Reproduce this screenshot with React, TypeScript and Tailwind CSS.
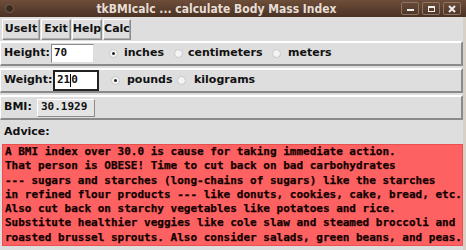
import React from "react";

const ui = { fontFamily: '"DejaVu Sans", sans-serif' };
const mono = { fontFamily: '"DejaVu Sans Mono", monospace' };

function Radio({ on }: { on?: boolean }) {
  return (
    <span className="inline-flex shrink-0 w-[9px] h-[9px] rounded-full bg-[#f4f4f4] border border-[#c8c8c8] items-center justify-center">
      {on && <span className="w-[3px] h-[3px] rounded-full bg-[#222]" />}
    </span>
  );
}

function TkButton({ label, w }: { label: string; w: string }) {
  return (
    <div
      className={`${w} h-[21px] flex items-center justify-center bg-[#dedede] border border-t-white border-l-white border-r-[#8a8a8a] border-b-[#8a8a8a] shadow-[inset_-1px_-1px_0_#b0b0b0] text-[11px] font-bold text-[#111]`}
    >
      {label}
    </div>
  );
}

function Frame({ children }: { children: React.ReactNode }) {
  return (
    <div className="h-[25px] flex items-center border-t-2 border-l border-t-white border-l-white border-r-2 border-b-2 border-r-[#8a8a8a] border-b-[#8a8a8a] pl-[3px] whitespace-nowrap">
      {children}
    </div>
  );
}

export default function App() {
  const lines = [
    "A BMI index over 30.0 is cause for taking immediate action.",
    "That person is OBESE! Time to cut back on bad carbohydrates",
    "--- sugars and starches (long-chains of sugars) like the starches",
    "in refined flour products --- like donuts, cookies, cake, bread, etc.",
    "Also cut back on starchy vegetables like potatoes and rice.",
    "Substitute healthier veggies like cole slaw and steamed broccoli and",
    "roasted brussel sprouts. Also consider salads, green beans, and peas.",
  ];
  return (
    <div className="w-[466px] h-[250px] overflow-hidden bg-[#d8d0c4] flex flex-col" style={ui}>
      {/* title bar */}
      <div className="h-[17px] flex items-center bg-gradient-to-b from-[#6e4e3a] to-[#4a3224] px-[5px]">
        <span className="w-[9px] h-[9px] rounded-full bg-[#3a2a20] border border-[#7a6050]" />
        <div className="flex-1 text-center text-[12px] font-bold text-[#e6ded5] leading-none pl-[18px]" style={{ fontFamily: '"DejaVu Sans Condensed", "DejaVu Sans", sans-serif' }}>
          tkBMIcalc ... calculate Body Mass Index
        </div>
        <div className="flex gap-[3px]">
          <span className="w-[18px] h-[13px] border border-[#8d7565] rounded-[2px] flex items-end justify-center pb-[3px]">
            <span className="w-[7px] h-[2px] bg-[#eee]" />
          </span>
          <span className="w-[18px] h-[13px] border border-[#8d7565] rounded-[2px] flex items-center justify-center">
            <span className="w-[7px] h-[6px] border border-[#eee] border-t-2" />
          </span>
          <span className="w-[18px] h-[13px] border border-[#8d7565] rounded-[2px] flex items-center justify-center">
            <svg width="8" height="8" viewBox="0 0 8 8">
              <path d="M1 1L7 7M7 1L1 7" stroke="#eee" strokeWidth="2" />
            </svg>
          </span>
        </div>
      </div>

      <div className="flex-1 bg-[#dedede] mr-[3px] flex flex-col">
        {/* toolbar */}
        <div className="h-[24px] pt-[2px] pl-[2px] flex gap-[1px]">
          <TkButton label="UseIt" w="w-[38px]" />
          <TkButton label="Exit" w="w-[30px]" />
          <TkButton label="Help" w="w-[30px]" />
          <TkButton label="Calc" w="w-[28px]" />
        </div>

        <div className="flex flex-col gap-[2px] text-[11px] font-bold text-[#111]">
          <Frame>
            <span className="w-[47px] shrink-0">Height:</span>
            <div className="w-[43px] shrink-0 h-[19px] bg-white border border-t-[#8a8a8a] border-l-[#8a8a8a] border-r-[#dedede] border-b-[#dedede] flex items-center pl-[2px]" style={mono}>
              70
            </div>
            <span className="ml-[15px] flex"><Radio on /></span>
            <span className="ml-[6px] w-[50px] shrink-0">inches</span>
            <span className="flex"><Radio /></span>
            <span className="ml-[5px] w-[84px] shrink-0">centimeters</span>
            <span className="flex"><Radio /></span>
            <span className="ml-[7px]">meters</span>
          </Frame>
          <Frame>
            <span className="w-[49px] shrink-0">Weight:</span>
            <div className="w-[46px] shrink-0 h-[21px] bg-white border-2 border-[#222] flex items-center pl-[2px]" style={mono}>
              21<span className="inline-block w-[1px] h-[13px] bg-black" />0
            </div>
            <span className="ml-[12px] flex"><Radio on /></span>
            <span className="ml-[7px] w-[50px] shrink-0">pounds</span>
            <span className="flex"><Radio /></span>
            <span className="ml-[8px]">kilograms</span>
          </Frame>
          <Frame>
            <span className="w-[33px] shrink-0">BMI:</span>
            <div className="w-[58px] h-[18px] bg-[#e4e4e4] border border-t-white border-l-white border-r-[#8a8a8a] border-b-[#8a8a8a] flex items-center pl-[3px]" style={mono}>
              30.1929
            </div>
          </Frame>
        </div>

        <div className="h-[24px] flex items-center pl-[4px] text-[11px] font-bold text-[#111]">Advice:</div>

        <div
          className="h-[102px] ml-[2px] bg-[#fe6161] border border-[#e85050] pl-[2px] text-[11px] font-bold leading-[14.3px] text-[#100000] whitespace-pre [-webkit-text-stroke:0.25px_#100000]"
          style={mono}
        >
          {lines.map((l, i) => (
            <div key={i}>{l}</div>
          ))}
        </div>
      </div>
    </div>
  );
}
